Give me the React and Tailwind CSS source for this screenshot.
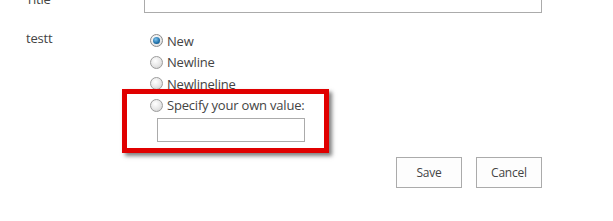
import React from "react";

function Radio({ checked }) {
  if (checked) {
    return (
      <span className="inline-flex shrink-0 w-[13px] h-[13px] rounded-full border border-[#8a8a8a] bg-[radial-gradient(circle_at_40%_35%,#ffffff,#d8d8d8)] items-center justify-center">
        <span className="w-[7px] h-[7px] rounded-full bg-[radial-gradient(circle_at_40%_35%,#7fc4ee,#1d6fa8_60%,#0d3f66)]" />
      </span>
    );
  }
  return (
    <span className="inline-block shrink-0 w-[13px] h-[13px] rounded-full border border-[#9c9c9c] bg-[radial-gradient(circle_at_40%_35%,#ffffff,#e6e6e6_55%,#c8c8c8)]" />
  );
}

export default function App() {
  const options = ["New", "Newline", "Newlineline"];
  return (
    <div className="relative w-[613px] h-[221px] overflow-hidden bg-white text-[13px] leading-[18px] tracking-[-0.2px] text-[#444] font-['Segoe_UI','Open_Sans',sans-serif]">
      <div className="flex items-start -mt-[11px]">
        <div className="w-[144px] pl-[26px] pt-[1px]">Title</div>
        <div className="w-[398px] h-[24px] border border-[#ababab] bg-white" />
      </div>

      <div className="flex items-start mt-[17px]">
        <div className="w-[150px] pl-[26px] -mt-[1px]">testt</div>
        <div className="flex flex-col">
          {options.map((o, i) => (
            <label key={o} className="flex items-center gap-[4px] h-[21.5px]">
              <Radio checked={i === 0} />
              <span>{o}</span>
            </label>
          ))}
          <label className="flex items-center gap-[4px] h-[21.5px]">
            <Radio />
            <span>Specify your own value:</span>
          </label>
          <div className="ml-[7px] mt-[2px] w-[148px] h-[24px] border border-[#ababab] bg-white" />
        </div>
      </div>

      <div className="flex justify-end gap-[14px] pr-[71px] mt-[15px]">
        <button className="w-[66px] h-[31px] border border-[#ababab] bg-[#fdfdfd] text-[12px] text-[#444]">
          Save
        </button>
        <button className="w-[66px] h-[31px] border border-[#ababab] bg-[#fdfdfd] text-[12px] text-[#444]">
          Cancel
        </button>
      </div>

      <div className="absolute left-[122px] top-[89px] w-[207px] h-[64px] border-[5px] border-[#e00000] shadow-[3px_3px_4px_rgba(0,0,0,0.5)]" />
    </div>
  );
}
